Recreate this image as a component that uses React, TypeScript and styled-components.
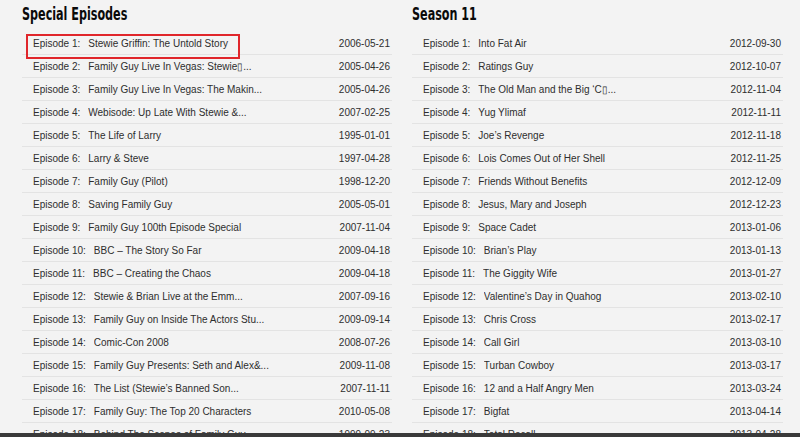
import React from "react";
import styled, { createGlobalStyle } from "styled-components";

const Global = createGlobalStyle`
  html, body { margin: 0; padding: 0; background: #f3f3f3; }
  body { font-family: "Liberation Sans", Arial, sans-serif; color: #333; }
`;

type Ep = { n: number; title: string; date: string };

const special: Ep[] = [
  { n: 1, title: "Stewie Griffin: The Untold Story", date: "2006-05-21" },
  { n: 2, title: "Family Guy Live In Vegas: Stewie\u25AF...", date: "2005-04-26" },
  { n: 3, title: "Family Guy Live In Vegas: The Makin...", date: "2005-04-26" },
  { n: 4, title: "Webisode: Up Late With Stewie &...", date: "2007-02-25" },
  { n: 5, title: "The Life of Larry", date: "1995-01-01" },
  { n: 6, title: "Larry & Steve", date: "1997-04-28" },
  { n: 7, title: "Family Guy (Pilot)", date: "1998-12-20" },
  { n: 8, title: "Saving Family Guy", date: "2005-05-01" },
  { n: 9, title: "Family Guy 100th Episode Special", date: "2007-11-04" },
  { n: 10, title: "BBC \u2013 The Story So Far", date: "2009-04-18" },
  { n: 11, title: "BBC \u2013 Creating the Chaos", date: "2009-04-18" },
  { n: 12, title: "Stewie & Brian Live at the Emm...", date: "2007-09-16" },
  { n: 13, title: "Family Guy on Inside The Actors Stu...", date: "2009-09-14" },
  { n: 14, title: "Comic-Con 2008", date: "2008-07-26" },
  { n: 15, title: "Family Guy Presents: Seth and Alex&...", date: "2009-11-08" },
  { n: 16, title: "The List (Stewie\u2019s Banned Son...", date: "2007-11-11" },
  { n: 17, title: "Family Guy: The Top 20 Characters", date: "2010-05-08" },
  { n: 18, title: "Behind The Scenes of Family Guy", date: "1999-09-23" },
];

const season11: Ep[] = [
  { n: 1, title: "Into Fat Air", date: "2012-09-30" },
  { n: 2, title: "Ratings Guy", date: "2012-10-07" },
  { n: 3, title: "The Old Man and the Big \u2018C\u25AF...", date: "2012-11-04" },
  { n: 4, title: "Yug Ylimaf", date: "2012-11-11" },
  { n: 5, title: "Joe\u2019s Revenge", date: "2012-11-18" },
  { n: 6, title: "Lois Comes Out of Her Shell", date: "2012-11-25" },
  { n: 7, title: "Friends Without Benefits", date: "2012-12-09" },
  { n: 8, title: "Jesus, Mary and Joseph", date: "2012-12-23" },
  { n: 9, title: "Space Cadet", date: "2013-01-06" },
  { n: 10, title: "Brian\u2019s Play", date: "2013-01-13" },
  { n: 11, title: "The Giggity Wife", date: "2013-01-27" },
  { n: 12, title: "Valentine\u2019s Day in Quahog", date: "2013-02-10" },
  { n: 13, title: "Chris Cross", date: "2013-02-17" },
  { n: 14, title: "Call Girl", date: "2013-03-10" },
  { n: 15, title: "Turban Cowboy", date: "2013-03-17" },
  { n: 16, title: "12 and a Half Angry Men", date: "2013-03-24" },
  { n: 17, title: "Bigfat", date: "2013-04-14" },
  { n: 18, title: "Total Recall", date: "2013-04-28" },
];

const Page = styled.div`
  height: 100vh;
  display: flex;
  flex-direction: column;
  overflow: hidden;
`;

const Content = styled.main`
  flex: 1;
  overflow: hidden;
  display: grid;
  grid-template-columns: 370px 371px;
  column-gap: 20px;
  padding-left: 22px;
`;

const Section = styled.section`
  display: flex;
  flex-direction: column;
`;

const HeadingBox = styled.div`
  height: 32px;
  padding-top: 4px;
  box-sizing: border-box;
`;

const Heading = styled.h2`
  margin: 0;
  display: inline-block;
  transform: scaleX(0.69);
  transform-origin: left center;
  font-family: "DejaVu Sans Condensed", "DejaVu Sans", sans-serif;
  font-weight: 700;
  font-size: 18px;
  line-height: 20px;
  color: #0a0a0a;
  white-space: nowrap;
`;

const List = styled.ul`
  list-style: none;
  margin: 0;
  padding: 0;
`;

const Row = styled.li`
  position: relative;
  display: flex;
  align-items: center;
  height: 23px;
  box-sizing: border-box;
  border-bottom: 1px solid #e3e3e3;
  padding: 0 2px 0 11px;
  font-size: 10px;
  color: #2e2e2e;
  white-space: nowrap;
`;

const Label = styled.span`
  margin-right: 8px;
`;

const Title = styled.span`
  flex: 1;
  overflow: hidden;
`;

const DateText = styled.span`
  margin-left: auto;
`;

const Highlight = styled.div`
  position: absolute;
  left: 4px;
  top: 2px;
  width: 214px;
  height: 25px;
  box-sizing: border-box;
  border: 2px solid #e0262b;
  pointer-events: none;
`;

const BottomBar = styled.div`
  height: 4px;
  flex-shrink: 0;
  background: #3a3a3a;
`;

const EpisodeList = ({ items, highlightFirst }: { items: Ep[]; highlightFirst?: boolean }) => (
  <List>
    {items.map((e, i) => (
      <Row key={e.n}>
        <Label>Episode {e.n}:</Label>
        <Title>{e.title}</Title>
        <DateText>{e.date}</DateText>
        {highlightFirst && i === 0 && <Highlight />}
      </Row>
    ))}
  </List>
);

export default function App() {
  return (
    <Page>
      <Global />
      <Content>
        <Section>
          <HeadingBox>
            <Heading>Special Episodes</Heading>
          </HeadingBox>
          <EpisodeList items={special} highlightFirst />
        </Section>
        <Section>
          <HeadingBox>
            <Heading>Season 11</Heading>
          </HeadingBox>
          <EpisodeList items={season11} />
        </Section>
      </Content>
      <BottomBar />
    </Page>
  );
}
